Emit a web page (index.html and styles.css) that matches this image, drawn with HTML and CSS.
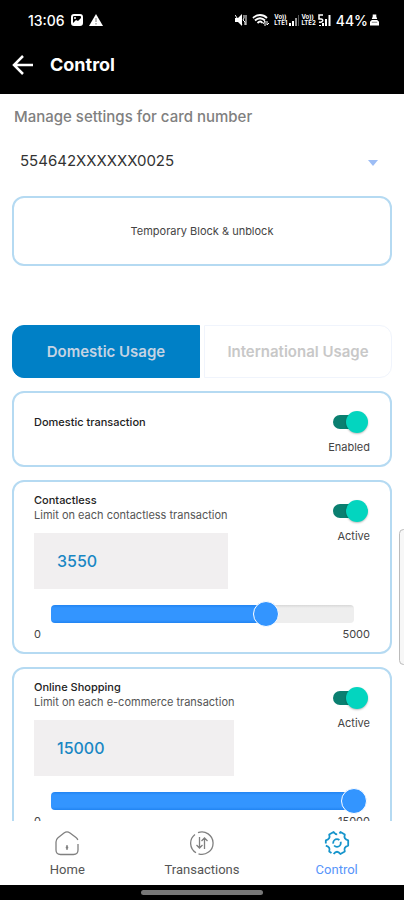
FILE: index.html
```html
<!DOCTYPE html>
<html lang="en">
<head>
<meta charset="utf-8">
<meta name="viewport" content="width=device-width, initial-scale=1">
<title>Control</title>
<link rel="stylesheet" href="styles.css">
</head>
<body>
<div class="app">
  <header class="top">
    <div class="status">
      <div class="status-group">
        <span class="clock">13:06</span>
        <svg width="12" height="12" viewBox="0 0 12 12"><rect x="1" y="1" width="10" height="10" rx="2" fill="none" stroke="#fff" stroke-width="2"/><path d="M2 9l3-3 2 1 3-3v6H2z" fill="#fff"/><circle cx="4" cy="4" r="1" fill="#fff"/></svg>
        <svg class="warn" width="14" height="12" viewBox="0 0 14 12"><path d="M7 0l7 12H0z" fill="#fff"/><path d="M7 4v4M7 9v1.500" stroke="#777" stroke-width="1"/></svg>
      </div>
      <div class="status-group status-right">
        <svg width="12" height="12" viewBox="0 0 12 12"><path d="M0 4h3l4-4v12L3 8H0z" fill="#fff"/><path d="M0 1l7 10M9 1v3l-1 2 2 2v3M11 1v10" stroke="#fff" stroke-width="1" fill="none"/></svg>
        <svg class="wifi" width="17" height="12" viewBox="0 0 17 12"><path d="M1 4c4-4 10-4 14 0M3 6.500c3-3 7-3 10 0M5.500 9c2-2 3.500-2 5 0" fill="none" stroke="#fff" stroke-width="1.800"/><path d="M11 10l2-3v5M15 7v4l2-2" stroke="#fff" fill="none"/></svg>
        <span class="volte">Vo))<br>LTE1</span>
        <svg width="10" height="12" viewBox="0 0 10 12"><path d="M1 9v3M4 7v5" stroke="#fff" stroke-width="2"/><path d="M7 4v8" stroke="#ccc" stroke-width="1.500"/><path d="M9.500 1v11" stroke="#555"/></svg>
        <span class="volte">Vo))<br>LTE2</span>
        <svg class="bars" width="13" height="12" viewBox="0 0 13 12"><path d="M5 1H1v4h2c3 0 2 4-2 3" stroke="#fff" stroke-width="1.500" fill="none"/><path d="M2 11v1M5 9v3M8 5v7M11.500 1v11" stroke="#fff" stroke-width="2"/></svg>
        <span class="battery">44%</span>
        <svg width="9" height="12" viewBox="0 0 10 12"><path d="M3 0h4v2l1 3H2l1-3zM2 6h6l2 2v4H0V8z" fill="#fff"/><path d="M2 8.500h6" stroke="#777"/></svg>
      </div>
    </div>
    <div class="appbar">
      <button class="back" aria-label="Back"><svg width="22" height="20" viewBox="0 0 22 20"><path d="M21 10H2M11 1L2 10l9 9" fill="none" stroke="#fff" stroke-width="2.500"/></svg></button>
      <h1>Control</h1>
    </div>
  </header>

  <main>
    <label class="field-label" for="card">Manage settings for card number</label>
    <div class="select-row">
      <select id="card"><option>554642XXXXXX0025</option></select>
      <svg class="caret" width="10" height="6" viewBox="0 0 10 6"><path d="M0 0h10L5 6z" fill="#9dbdf5"/></svg>
    </div>
    <button class="block-button">Temporary Block &amp; unblock</button>

    <div class="tabs" role="tablist">
      <button class="tab active" role="tab" aria-selected="true">Domestic Usage</button>
      <button class="tab" role="tab" aria-selected="false">International Usage</button>
    </div>

    <section class="card simple">
      <label class="title" for="domestic">Domestic transaction</label>
      <div class="toggle">
        <input type="checkbox" id="domestic" checked>
        <span>Enabled</span>
      </div>
    </section>

    <section class="card">
      <div class="card-head">
        <div class="limit">
          <label class="title" for="contactless">Contactless</label>
          <label class="sub" for="contactless-limit">Limit on each contactless transaction</label>
          <div class="value-box"><input id="contactless-limit" type="text" size="1" value="3550"></div>
        </div>
        <div class="toggle">
          <input type="checkbox" id="contactless" checked>
          <span>Active</span>
        </div>
      </div>
      <div class="slider" style="--value: 71%">
        <input type="range" aria-label="Contactless limit" min="0" max="5000" value="3550">
      </div>
      <div class="range"><span>0</span><span>5000</span></div>
    </section>

    <section class="card">
      <div class="card-head">
        <div class="limit">
          <label class="title" for="online">Online Shopping</label>
          <label class="sub" for="online-limit">Limit on each e-commerce transaction</label>
          <div class="value-box"><input id="online-limit" type="text" size="1" value="15000"></div>
        </div>
        <div class="toggle">
          <input type="checkbox" id="online" checked>
          <span>Active</span>
        </div>
      </div>
      <div class="slider" style="--value: 100%">
        <input type="range" aria-label="Online shopping limit" min="0" max="15000" value="15000">
      </div>
      <div class="range"><span>0</span><span>15000</span></div>
    </section>
  </main>

  <nav class="bottom">
    <a href="#home">
      <svg width="26" height="26" viewBox="0 0 26 26" fill="none" stroke="#808080" stroke-width="1.300"><path d="M24 14v6c0 3-1.500 4.500-4.500 4.500h-13C3.500 24.500 2 23 2 20v-8c0-2 .5-3 2-4.200l6-4.800c2-1.500 4-1.500 6 0l6 4.500c1 .8 1.500 1.500 1.800 2.500"/><path d="M13 15v5"/><circle cx="13" cy="17.500" r=".7"/></svg>
      Home
    </a>
    <a href="#transactions">
      <svg width="26" height="26" viewBox="0 0 26 26" fill="none" stroke="#808080" stroke-width="1.300"><path d="M6 4.500a11 11 0 0 0 1 18.200M9.500 23.800A11.200 11.200 0 1 0 9 2.600"/><path d="M10.500 7v11M7.500 15l3 3 3-3M15.500 19V8M12.500 11l3-3 3 3"/></svg>
      Transactions
    </a>
    <a href="#control" class="current">
      <svg width="26" height="26" viewBox="0 0 26 26" fill="none" stroke="#1594cb" stroke-width="1.800" stroke-linejoin="round"><path d="M15.500 3.500l1-1.500 4.300 2.600q-1.500 4.400 3.400 5.800v5.200q-4.900 1.400-3.400 5.800L16.400 24q-3.400-4.500-6.800 0M7.500 23l-2.300-1.600q1.500-4.400-3.400-5.800M1.800 13.500v-3.100q4.900-1.400 3.400-5.800L9.600 2q1.600 2.300 3.600 2.300"/><circle cx="13" cy="13" r="3.800" stroke-dasharray="9 2"/></svg>
      Control
    </a>
  </nav>
  <div class="system"><div class="handle"></div></div>
  <div class="edge-panel"></div>
</div>
</body>
</html>
```
FILE: styles.css
```css
* { box-sizing: border-box; }

body {
  margin: 0;
  background: #fff;
  color: #444;
  font-family: Inter, "Liberation Sans", sans-serif;
  font-size: 11px;
  line-height: 15px;
}

button, input, select { font: inherit; color: inherit; margin: 0; }

.app {
  position: relative;
  display: flex;
  flex-direction: column;
  height: 100vh;
  overflow: hidden;
}

.top { flex: none; background: #000; color: #fff; }

.status {
  display: flex;
  justify-content: space-between;
  align-items: center;
  height: 40px;
  padding: 0 25px 0 28px;
}
.status-group { display: flex; align-items: center; gap: 6px; }
.status-right { gap: 2px; }
.clock, .battery { font-size: 14px; font-weight: 500; }
.wifi { margin: 0 3px; }
.bars { margin-right: 3px; }
.volte { font-size: 6px; line-height: 6px; font-weight: 700; }

.appbar {
  display: flex;
  align-items: center;
  gap: 16px;
  height: 54px;
  padding: 0 12px 4px;
}
.back { display: flex; padding: 0; border: 0; background: none; }
h1 { margin: 0; font-size: 18px; line-height: 24px; font-weight: 700; }

main { flex: 1; min-height: 0; overflow: hidden; padding: 12px 12px 0; }

.field-label {
  display: block;
  font-size: 15px;
  line-height: 22px;
  font-weight: 500;
  color: #808080;
  padding-left: 2px;
}
.select-row { position: relative; margin: 16px 0 20px; }
select {
  display: block;
  width: 100%;
  height: 32px;
  padding: 0 8px;
  border: 0;
  background: none;
  appearance: none;
  font-size: 15px;
  color: #333;
}
.caret { position: absolute; right: 14px; top: 16px; pointer-events: none; }

.block-button, .card {
  border: 2px solid #b5daf2;
  border-radius: 12px;
  background: #fff;
}
.block-button { display: block; width: 100%; height: 70px; }

.tabs { display: flex; gap: 4px; margin: 59px 0 13px; }
.tab {
  flex: 1;
  height: 53px;
  padding: 0;
  border: 1px solid #f0f4fc;
  border-radius: 0 12px 12px 0;
  background: #fff;
  color: #c8c8c8;
  font-size: 15px;
  font-weight: 600;
}
.tab.active {
  border-color: #0080c6;
  border-radius: 12px 0 0 12px;
  background: #0080c6;
  color: #c5d3e3;
}

.card { padding: 11px 20px 10px; margin-bottom: 13px; }
.card-head, .simple { display: flex; justify-content: space-between; }
.simple { padding-top: 18px; padding-bottom: 10px; }

.title { display: block; font-weight: 500; color: #222; }
.simple .title { line-height: 22px; }
.sub { display: block; color: #555; }

.toggle { display: flex; flex-direction: column; align-items: flex-end; gap: 7px; }
.card-head .toggle { padding-top: 7px; }
.toggle input {
  position: relative;
  width: 35px;
  height: 22px;
  margin-right: 2px;
  appearance: none;
}
.toggle input::before {
  content: "";
  position: absolute;
  inset: 4px 4px 4px 0;
  border-radius: 7px;
  background: #0a7f70;
}
.toggle input::after {
  content: "";
  position: absolute;
  top: 0;
  right: 0;
  width: 22px;
  height: 22px;
  border-radius: 50%;
  background: #03d5bf;
  box-shadow: 0 1px 2px #0004;
}

.value-box { display: flex; margin-top: 10px; }
.value-box input {
  flex: 1;
  min-width: 0;
  height: 56px;
  padding: 0 23px;
  border: 0;
  background: #f1eff0;
  color: #1a87c4;
  font-size: 16px;
  font-weight: 500;
}

.slider {
  display: flex;
  height: 18px;
  margin: 16px 16px 4px 17px;
  border-radius: 4px;
  background: linear-gradient(#2184f2, #3395ff 3px, #3395ff 15px, #2184f2) 0 0 / var(--value) 100% no-repeat, linear-gradient(#d8d8d8, #eee 3px);
}
.slider input {
  flex: 1;
  min-width: 0;
  height: 26px;
  margin: -4px -13px;
  appearance: none;
  background: none;
}
.slider input::-webkit-slider-thumb {
  appearance: none;
  width: 26px;
  height: 26px;
  border: 1px solid #fff;
  border-radius: 50%;
  background: #3395ff;
}

.range { display: flex; justify-content: space-between; }

.bottom {
  flex: none;
  display: flex;
  height: 64px;
  background: #fff;
  font-family: Roboto, "Liberation Sans", sans-serif;
  font-size: 13px;
  line-height: 16px;
}
.bottom a {
  flex: 1;
  display: flex;
  flex-direction: column;
  align-items: center;
  gap: 6px;
  padding-top: 9px;
  color: #555;
  text-decoration: none;
}
.bottom .current { color: #5795fa; }

.system { flex: none; height: 15px; padding-top: 5px; background: #000; }
.handle { width: 122px; height: 5px; margin: 0 auto; border-radius: 3px; background: #777; }

.edge-panel {
  position: absolute;
  top: 529px;
  right: -4px;
  width: 9px;
  height: 136px;
  border: 1px solid #bbb;
  border-radius: 6px;
  background: #f7f7f7;
}
```
